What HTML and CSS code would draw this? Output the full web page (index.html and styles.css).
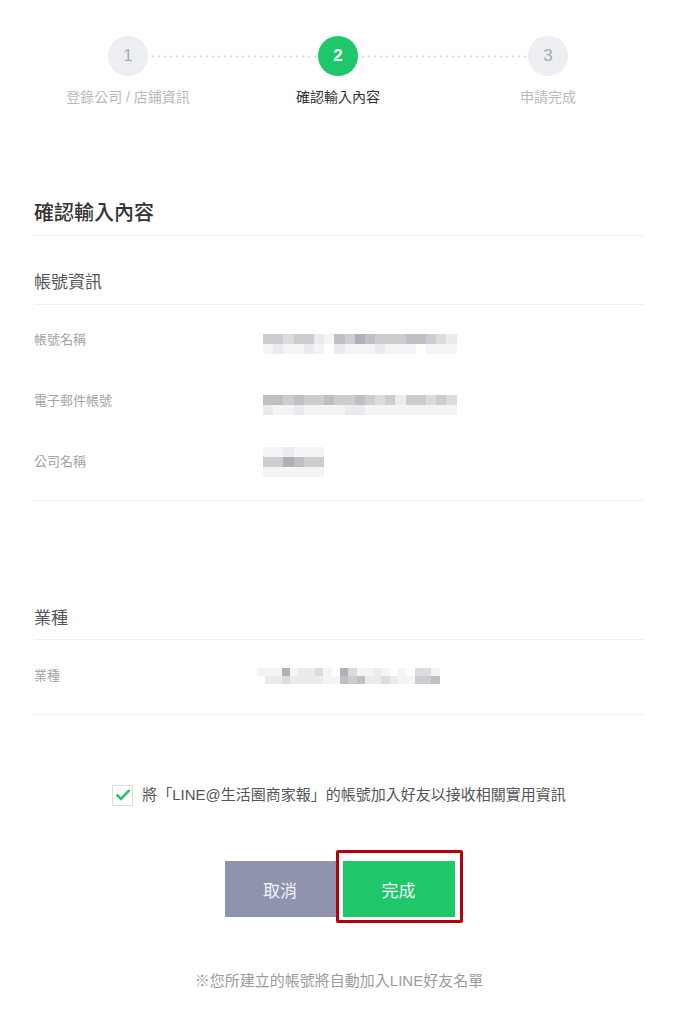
FILE: index.html
```html
<!DOCTYPE html>
<html lang="zh-Hant">
<head>
<meta charset="utf-8">
<title>確認輸入內容</title>
<link rel="stylesheet" href="styles.css">
</head>
<body>
<div class="stepper">
  <div class="step-track">
    <span class="circle">1</span>
    <span class="dots"></span>
    <span class="circle active">2</span>
    <span class="dots"></span>
    <span class="circle">3</span>
  </div>
  <div class="step-labels">
    <span class="step-label">登錄公司 / 店鋪資訊</span>
    <span class="step-label active">確認輸入內容</span>
    <span class="step-label">申請完成</span>
  </div>
</div>

<main class="content">
  <h2 class="page-title">確認輸入內容</h2>

  <section class="group">
    <h3 class="group-title">帳號資訊</h3>
    <div class="rows">
      <div class="row">
        <span class="label">帳號名稱</span>
        <div class="blur shift">
          <div class="pr"><i class="k4"></i><i class="k4"></i><i class="k3"></i><i class="k4"></i><i class="k4"></i><i class="k2"></i><i class="k1"></i><i class="k5"></i><i class="k4"></i><i class="k6"></i><i class="k5"></i><i class="k4"></i><i class="k4"></i><i class="k4"></i><i class="k5"></i><i class="k5"></i><i class="k4"></i><i class="k3"></i><i class="k2"></i></div>
          <div class="pr"><i class="k1"></i><i class="k2"></i><i class="k1"></i><i class="k1"></i><i class="k2"></i><i class="k1"></i><i class="k0"></i><i class="k2"></i><i class="k1"></i><i class="k1"></i><i class="k1"></i><i class="k2"></i><i class="k1"></i><i class="k1"></i><i class="k1"></i><i class="k0"></i><i class="k1"></i><i class="k1"></i><i class="k1"></i></div>
        </div>
      </div>
      <div class="row">
        <span class="label">電子郵件帳號</span>
        <div class="blur shift">
          <div class="pr"><i class="k5"></i><i class="k5"></i><i class="k4"></i><i class="k5"></i><i class="k4"></i><i class="k4"></i><i class="k5"></i><i class="k4"></i><i class="k4"></i><i class="k5"></i><i class="k4"></i><i class="k3"></i><i class="k4"></i><i class="k2"></i><i class="k4"></i><i class="k4"></i><i class="k3"></i><i class="k4"></i><i class="k3"></i></div>
          <div class="pr"><i class="k2"></i><i class="k1"></i><i class="k1"></i><i class="k2"></i><i class="k1"></i><i class="k1"></i><i class="k1"></i><i class="k1"></i><i class="k2"></i><i class="k2"></i><i class="k1"></i><i class="k1"></i><i class="k1"></i><i class="k1"></i><i class="k1"></i><i class="k1"></i><i class="k1"></i><i class="k1"></i><i class="k1"></i></div>
        </div>
      </div>
      <div class="row">
        <span class="label">公司名稱</span>
        <div class="blur">
          <div class="pr"><i class="k1"></i><i class="k1"></i><i class="k2"></i><i class="k1"></i><i class="k1"></i><i class="k1"></i></div>
          <div class="pr"><i class="k4"></i><i class="k4"></i><i class="k6"></i><i class="k5"></i><i class="k4"></i><i class="k4"></i></div>
          <div class="pr"><i class="k1"></i><i class="k1"></i><i class="k1"></i><i class="k1"></i><i class="k1"></i><i class="k1"></i></div>
        </div>
      </div>
    </div>
  </section>

  <section class="group industry">
    <h3 class="group-title">業種</h3>
    <div class="rows">
      <div class="row">
        <span class="label">業種</span>
        <div class="blur small">
          <div class="pr"><i class="k1"></i><i class="k1"></i><i class="k1"></i><i class="k6"></i><i class="k1"></i><i class="k2"></i><i class="k2"></i><i class="k3"></i><i class="k1"></i><i class="k0"></i><i class="k6"></i><i class="k3"></i><i class="k1"></i><i class="k1"></i><i class="k2"></i><i class="k1"></i><i class="k0"></i><i class="k1"></i><i class="k0"></i><i class="k3"></i><i class="k3"></i><i class="k1"></i></div>
          <div class="pr"><i class="k0"></i><i class="k2"></i><i class="k2"></i><i class="k3"></i><i class="k2"></i><i class="k2"></i><i class="k2"></i><i class="k2"></i><i class="k1"></i><i class="k1"></i><i class="k5"></i><i class="k4"></i><i class="k5"></i><i class="k2"></i><i class="k2"></i><i class="k3"></i><i class="k2"></i><i class="k1"></i><i class="k1"></i><i class="k4"></i><i class="k4"></i><i class="k5"></i></div>
        </div>
      </div>
    </div>
  </section>

  <label class="agree">
    <span class="checkbox">
      <svg width="14" height="12" viewBox="0 0 14 12"><path d="M1.5 6.5 L5 10 L12.5 2" fill="none" stroke="#1ec76a" stroke-width="2.6" stroke-linecap="square"/></svg>
    </span>
    <span class="agree-text">將「LINE@生活圈商家報」的帳號加入好友以接收相關實用資訊</span>
  </label>

  <div class="actions">
    <button class="btn cancel">取消</button>
    <div class="done-wrap">
      <button class="btn done">完成</button>
      <span class="highlight"></span>
    </div>
  </div>

  <p class="note">※您所建立的帳號將自動加入LINE好友名單</p>
</main>
</body>
</html>
```

FILE: styles.css
```css
* { box-sizing: border-box; }

body {
  margin: 0;
  background: #fff;
  font-family: "Liberation Sans", "Noto Sans CJK TC", sans-serif;
  color: #333;
}

/* stepper */
.stepper {
  padding-top: 36px;
}
.step-track {
  display: flex;
  align-items: center;
  padding-left: 108px;
}
.circle {
  width: 40px;
  height: 40px;
  border-radius: 50%;
  background: #eceef2;
  color: #a9abb0;
  font-size: 17px;
  display: flex;
  align-items: center;
  justify-content: center;
  flex: none;
}
.circle.active {
  background: #1ec76a;
  color: #fff;
  font-weight: bold;
}
.dots {
  width: 170px;
  height: 3px;
  flex: none;
  background-image: radial-gradient(circle, #d9dadd 0.9px, transparent 1.3px);
  background-size: 6px 3px;
  background-position: 2px 0;
}
.step-labels {
  display: flex;
  padding-left: 23px;
  margin-top: 12px;
}
.step-label {
  width: 210px;
  text-align: center;
  font-size: 14px;
  line-height: 18px;
  color: #b9babd;
}
.step-label.active {
  color: #333;
}

/* content */
.content {
  padding: 0 33px 0 34px;
}
.page-title {
  margin: 94px 0 0;
  font-size: 20px;
  line-height: 26px;
  font-weight: 500;
  color: #333;
  padding-bottom: 9px;
  border-bottom: 1px solid #efefef;
}
.group-title {
  margin: 0;
  font-size: 17px;
  line-height: 22px;
  font-weight: normal;
  color: #555;
  padding-bottom: 10px;
  border-bottom: 1px solid #efefef;
}
.group {
  margin-top: 36px;
  border-bottom: 1px solid #efefef;
}
.group.industry {
  margin-top: 107px;
}
.industry .group-title {
  padding-bottom: 9px;
}
.rows {
  display: flex;
  flex-direction: column;
  gap: 41px;
  padding: 25px 0 28px;
}
.industry .rows {
  padding-top: 26px;
}
.row {
  display: flex;
  align-items: center;
  height: 20px;
}
.label {
  width: 229px;
  flex: none;
  font-size: 13px;
  line-height: 20px;
  color: #a3a4a8;
}

/* pixelated (masked) values */
.blur {
  display: flex;
  flex-direction: column;
}
.blur.shift { margin-top: 8px; }
.blur.small { margin-left: -6px; }
.pr { display: flex; }
.pr i {
  display: block;
  width: 10.2px;
  height: 10px;
}
.small .pr i {
  width: 8.3px;
  height: 8px;
}
.k0 { background: #ffffff; }
.k1 { background: #f4f4f5; }
.k2 { background: #ebebed; }
.k3 { background: #dcdcdf; }
.k4 { background: #cdcdd1; }
.k5 { background: #bfc0c5; }
.k6 { background: #aeb1b6; }

/* agreement */
.agree {
  display: flex;
  align-items: center;
  justify-content: center;
  margin-top: 70px;
  height: 20px;
  gap: 9px;
}
.checkbox {
  width: 21px;
  height: 21px;
  border: 1px solid #dedede;
  background: #fff;
  display: flex;
  align-items: center;
  justify-content: center;
  flex: none;
}
.agree-text {
  font-size: 15px;
  line-height: 20px;
  color: #555;
}

/* buttons */
.actions {
  display: flex;
  justify-content: center;
  margin-top: 56px;
  padding-left: 1px;
}
.btn {
  border: 0;
  height: 56px;
  font-family: inherit;
  font-size: 17px;
  color: #f2f3f7;
  padding: 0;
}
.cancel {
  width: 111px;
  background: #8f93ae;
}
.done-wrap {
  position: relative;
  margin-left: 7px;
}
.done {
  width: 112px;
  background: #1ec76a;
  display: block;
}
.highlight {
  position: absolute;
  left: -7px;
  top: -11px;
  right: -8px;
  bottom: -6px;
  border: 3px solid #b5000b;
  border-radius: 2px;
}

.note {
  margin: 54px 0 0;
  text-align: center;
  font-size: 15px;
  line-height: 20px;
  color: #9a9b9f;
}
```
